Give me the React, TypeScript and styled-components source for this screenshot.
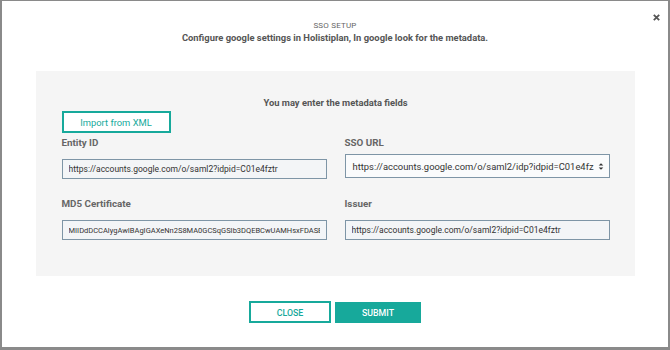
import React from 'react';
import styled, { createGlobalStyle } from 'styled-components';

const teal = '#17a99b';

const Global = createGlobalStyle`
  html, body {
    margin: 0;
    padding: 0;
    background: #8a8a8a;
    font-family: Roboto, 'Liberation Sans', sans-serif;
  }
`;

const Backdrop = styled.div`
  width: 670px;
  height: 350px;
  padding: 1px 2px 3px 2px;
  box-sizing: border-box;
`;

const Modal = styled.div`
  position: relative;
  height: 346px;
  background: #fff;
  display: flex;
  flex-direction: column;
  align-items: center;
`;

const CloseX = styled.button`
  position: absolute;
  top: 11px;
  right: 7px;
  border: 0;
  background: none;
  padding: 0;
  width: 10px;
  height: 10px;
  display: flex;
  align-items: center;
  justify-content: center;
  cursor: pointer;
`;

const Eyebrow = styled.div`
  margin-top: 19px;
  font-size: 8px;
  color: #666;
  letter-spacing: 0.2px;
  line-height: 11px;
`;

const Title = styled.h2`
  margin: 0;
  font-size: 9.4px;
  font-weight: 700;
  color: #555;
  line-height: 14px;
`;

const Panel = styled.div`
  margin-top: 26px;
  width: 599px;
  height: 205px;
  box-sizing: border-box;
  background: #f5f5f5;
  padding: 25px 25px 0 26px;
  display: flex;
  flex-direction: column;
`;

const PanelHeading = styled.div`
  text-align: center;
  font-size: 9.4px;
  font-weight: 700;
  color: #555;
  line-height: 14px;
`;

const OutlineButton = styled.button<{ $width: number }>`
  width: ${p => p.$width}px;
  height: 22px;
  box-sizing: border-box;
  border: 2px solid ${teal};
  background: #fff;
  color: ${teal};
  font-family: Roboto, 'Liberation Sans', sans-serif;
  font-size: 9.4px;
  padding: 0;
  cursor: pointer;
`;

const ImportRow = styled.div`
  margin-top: 1px;
  display: flex;
`;

const Grid = styled.div`
  display: grid;
  grid-template-columns: 265px 265px;
  column-gap: 18px;
  margin-top: 3px;
`;

const Field = styled.div`
  display: flex;
  flex-direction: column;
  height: 61px;
`;

const Label = styled.label`
  font-size: 9.8px;
  font-weight: 700;
  color: #666;
  line-height: 14px;
`;

const TextInput = styled.input<{ $small?: boolean }>`
  margin-top: 9px;
  height: 20px;
  box-sizing: border-box;
  border: 1px solid #7e95a6;
  background: #f3f5f7;
  padding: 0 6px;
  font-family: Roboto, 'Liberation Sans', sans-serif;
  font-size: ${p => (p.$small ? 7.5 : 8.5)}px;
  color: #333;
  outline: none;
`;

const SelectBox = styled.div`
  margin-top: 4px;
  height: 24px;
  box-sizing: border-box;
  border: 1px solid #7e95a6;
  background: #fafbfc;
  padding: 0 5px 0 7px;
  display: flex;
  align-items: center;
  justify-content: space-between;
  font-size: 9.4px;
  color: #333;
  white-space: nowrap;
  overflow: hidden;

  & > svg {
    flex-shrink: 0;
  }
`;

const Footer = styled.div`
  margin-top: 25px;
  display: flex;
  gap: 4px;
`;

const SolidButton = styled.button`
  width: 86px;
  height: 21px;
  margin-top: 1px;
  border: 0;
  background: ${teal};
  color: #fff;
  font-family: Roboto, 'Liberation Sans', sans-serif;
  font-size: 8.8px;
  font-weight: 500;
  padding: 0;
  cursor: pointer;
`;

const Caps = styled.span`
  font-size: 8.8px;
  font-weight: 500;
`;

export default function App() {
  return (
    <>
      <Global />
      <Backdrop>
        <Modal>
          <CloseX aria-label="close">
            <svg width="7" height="7" viewBox="0 0 7 7">
              <path d="M0.8 0.8L6.2 6.2M6.2 0.8L0.8 6.2" stroke="#555" strokeWidth="1.8" />
            </svg>
          </CloseX>
          <Eyebrow>SSO SETUP</Eyebrow>
          <Title>Configure google settings in Holistiplan, In google look for the metadata.</Title>
          <Panel>
            <PanelHeading>You may enter the metadata fields</PanelHeading>
            <ImportRow>
              <OutlineButton $width={109}>Import from XML</OutlineButton>
            </ImportRow>
            <Grid>
              <Field>
                <Label>Entity ID</Label>
                <TextInput readOnly value="https://accounts.google.com/o/saml2?idpid=C01e4fztr" />
              </Field>
              <Field>
                <Label>SSO URL</Label>
                <SelectBox>
                  <span>https://accounts.google.com/o/saml2/idp?idpid=C01e4fz</span>
                  <svg width="6" height="9" viewBox="0 0 6 9">
                    <path d="M0.7 3.6L3 1.3L5.3 3.6ZM0.7 5.4L3 7.7L5.3 5.4Z" fill="#333" />
                  </svg>
                </SelectBox>
              </Field>
              <Field>
                <Label>MD5 Certificate</Label>
                <TextInput $small readOnly value="MIIDdDCCAlygAwIBAgIGAXeNn2S8MA0GCSqGSIb3DQEBCwUAMHsxFDASBgNVBAcTC01vdW50YWlu" />
              </Field>
              <Field>
                <Label>Issuer</Label>
                <TextInput readOnly value="https://accounts.google.com/o/saml2?idpid=C01e4fztr" />
              </Field>
            </Grid>
          </Panel>
          <Footer>
            <OutlineButton $width={82}>
              <Caps>CLOSE</Caps>
            </OutlineButton>
            <SolidButton>SUBMIT</SolidButton>
          </Footer>
        </Modal>
      </Backdrop>
    </>
  );
}
